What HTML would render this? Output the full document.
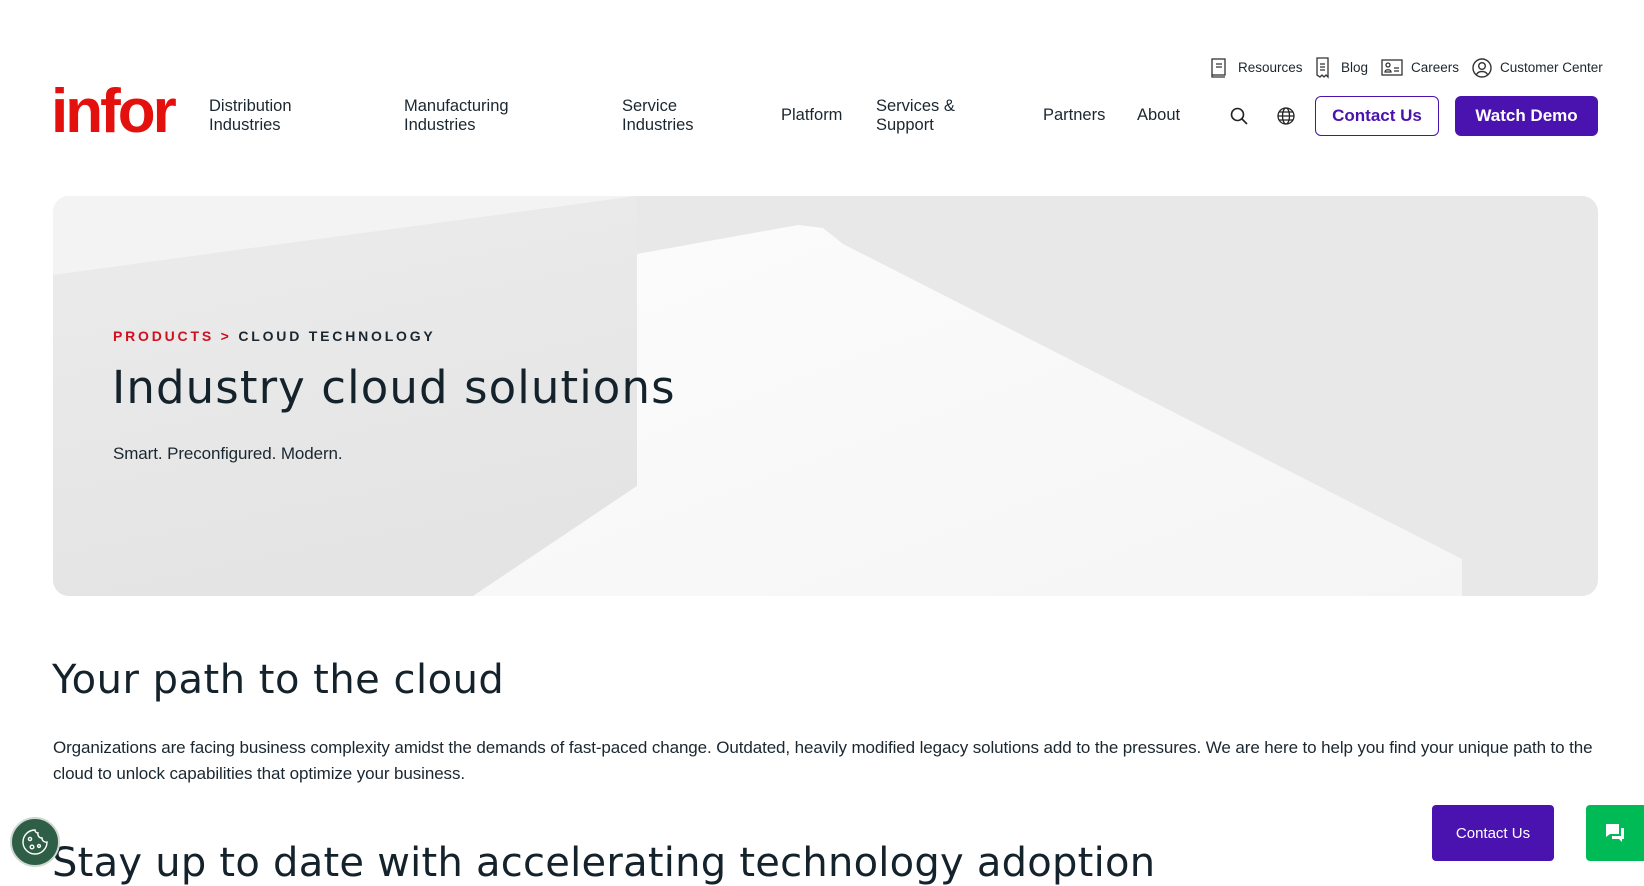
<!DOCTYPE html>
<html><head><meta charset="utf-8"><style>
*{margin:0;padding:0;box-sizing:border-box}
body{width:1644px;height:871px;overflow:hidden;background:#fff;font-family:"Liberation Sans",sans-serif;color:#1b2730;position:relative}
.a{position:absolute;white-space:nowrap}
.nav{font-size:16.5px;line-height:19px;color:#1b2730}
.top{font-size:13.5px;color:#1b2730;top:60px}
.btn{position:absolute;top:96px;height:40px;border-radius:6px;font-size:17px;font-weight:bold;display:flex;align-items:center;justify-content:center}
.h{font-family:"DejaVu Sans",sans-serif;color:#14222b}
</style></head><body>
<div class="a" style="left:51px;top:76px;font-size:62px;font-weight:bold;color:#e4100e;letter-spacing:-3px">infor</div>

<svg class="a" style="left:1210px;top:58px" width="18" height="20" viewBox="0 0 18 20" fill="none" stroke="#333" stroke-width="1.3"><rect x="2" y="1" width="13" height="16"/><path d="M2 17v2h13M6 6h6M6 9h6"/></svg>
<div class="a top" style="left:1238px">Resources</div>
<svg class="a" style="left:1313px;top:57px" width="18" height="22" viewBox="0 0 18 22" fill="none" stroke="#333" stroke-width="1.3"><path d="M4 1h11v19l-2-2-2 2-2-2-2 2-3-2V4z"/><path d="M7 7h5M7 10h5M7 13h5"/></svg>
<div class="a top" style="left:1341px">Blog</div>
<svg class="a" style="left:1381px;top:59px" width="22" height="17" viewBox="0 0 22 17" fill="none" stroke="#333" stroke-width="1.3"><rect x="1" y="1" width="20" height="15"/><circle cx="7" cy="6" r="2"/><path d="M4 13c0-3 6-3 6 0zM13 9h5M13 12h5"/></svg>
<div class="a top" style="left:1411px">Careers</div>
<svg class="a" style="left:1472px;top:58px" width="20" height="20" viewBox="0 0 20 20" fill="none" stroke="#333" stroke-width="1.4"><circle cx="10" cy="10" r="9"/><circle cx="10" cy="8" r="3.3"/><path d="M4.5 16.5c2-4 9-4 11 0"/></svg>
<div class="a top" style="left:1500px">Customer Center</div>

<div class="a nav" style="left:209px;top:97px">Distribution<br>Industries</div>
<div class="a nav" style="left:404px;top:97px">Manufacturing<br>Industries</div>
<div class="a nav" style="left:622px;top:97px">Service<br>Industries</div>
<div class="a nav" style="left:781px;top:106px">Platform</div>
<div class="a nav" style="left:876px;top:97px">Services &amp;<br>Support</div>
<div class="a nav" style="left:1043px;top:106px">Partners</div>
<div class="a nav" style="left:1137px;top:106px">About</div>
<svg class="a" style="left:1230px;top:107px" width="18" height="18" viewBox="0 0 18 18" fill="none" stroke="#222" stroke-width="1.6"><circle cx="7.5" cy="7.5" r="6"/><path d="M12 12l5 5"/></svg>
<svg class="a" style="left:1277px;top:107px" width="18" height="18" viewBox="0 0 18 18" fill="none" stroke="#222" stroke-width="1.3"><circle cx="9" cy="9" r="8"/><ellipse cx="9" cy="9" rx="3.5" ry="8"/><path d="M1 9h16M2.5 5h13M2.5 13h13"/></svg>
<div class="btn" style="left:1315px;width:124px;border:1.5px solid #4a13b0;color:#4a13b0">Contact Us</div>
<div class="btn" style="left:1455px;width:143px;background:#4a13b0;color:#fff">Watch Demo</div>

<svg class="a" style="left:53px;top:196px;border-radius:16px" width="1545" height="400" viewBox="0 0 1545 400">
<defs>
<linearGradient id="g1" x1="0" y1="0" x2="0.3" y2="1"><stop offset="0" stop-color="#ececec"/><stop offset="1" stop-color="#e4e4e4"/></linearGradient>
<linearGradient id="g2" x1="0" y1="0" x2="1" y2="1"><stop offset="0" stop-color="#fcfcfc"/><stop offset="1" stop-color="#f5f5f5"/></linearGradient>
</defs>
<rect width="1545" height="400" fill="#e8e8e8"/>
<polygon points="0,0 584,0 0,79" fill="#f3f3f3"/>
<polygon points="0,79 584,0 584,290 420,400 0,400" fill="url(#g1)"/>
<polygon points="584,58 745,29 770,32 790,48 1409,363 1409,400 420,400 584,290" fill="url(#g2)"/>
</svg>
<div class="a" style="left:113px;top:328px;font-size:14px;letter-spacing:2.8px;font-weight:bold"><span style="color:#d0101e">PRODUCTS &gt;</span> <span style="color:#1b2730">CLOUD TECHNOLOGY</span></div>
<div class="a h" style="left:112px;top:361px;font-size:45px;letter-spacing:1.1px">Industry cloud solutions</div>
<div class="a" style="left:113px;top:444px;font-size:17px;letter-spacing:-0.1px">Smart. Preconfigured. Modern.</div>

<div class="a h" style="left:52px;top:657px;font-size:40px;letter-spacing:0.5px">Your path to the cloud</div>
<div class="a" style="left:53px;top:735px;font-size:17px;line-height:26px;letter-spacing:-0.1px">Organizations are facing business complexity amidst the demands of fast-paced change. Outdated, heavily modified legacy solutions add to the pressures. We are here to help you find your unique path to the<br>cloud to unlock capabilities that optimize your business.</div>
<div class="a h" style="left:52px;top:840px;font-size:40px;letter-spacing:0.25px">Stay up to date with accelerating technology adoption</div>

<div class="a" style="left:1432px;top:805px;width:122px;height:56px;background:#4a13b0;border-radius:4px;color:#fff;font-size:15px;display:flex;align-items:center;justify-content:center">Contact Us</div>
<div class="a" style="left:1586px;top:805px;width:58px;height:56px;background:#00bb55;border-radius:4px 0 0 4px"></div>
<svg class="a" style="left:1604px;top:822px" width="22" height="22" viewBox="0 0 22 22" fill="#fff"><path d="M2 2h13v10H6l-4 3z"/><path d="M17 6h3v11h-2v3l-3-3H8v-3h9z"/></svg>
<div class="a" style="left:10px;top:817px;width:50px;height:50px;border-radius:50%;background:#2e5f46;border:2px solid #cfd8d2"></div>
<svg class="a" style="left:20px;top:827px" width="30" height="30" viewBox="0 0 30 30" fill="none" stroke="#fff" stroke-width="1.4"><path d="M15 3a12 12 0 1 0 12 12 4 4 0 0 1-5-4 4 4 0 0 1-4-5 3 3 0 0 1-3-3z"/><circle cx="10" cy="12" r="1.6"/><circle cx="12" cy="20" r="1.8"/><circle cx="19" cy="19" r="1.4"/></svg>
</body></html>
